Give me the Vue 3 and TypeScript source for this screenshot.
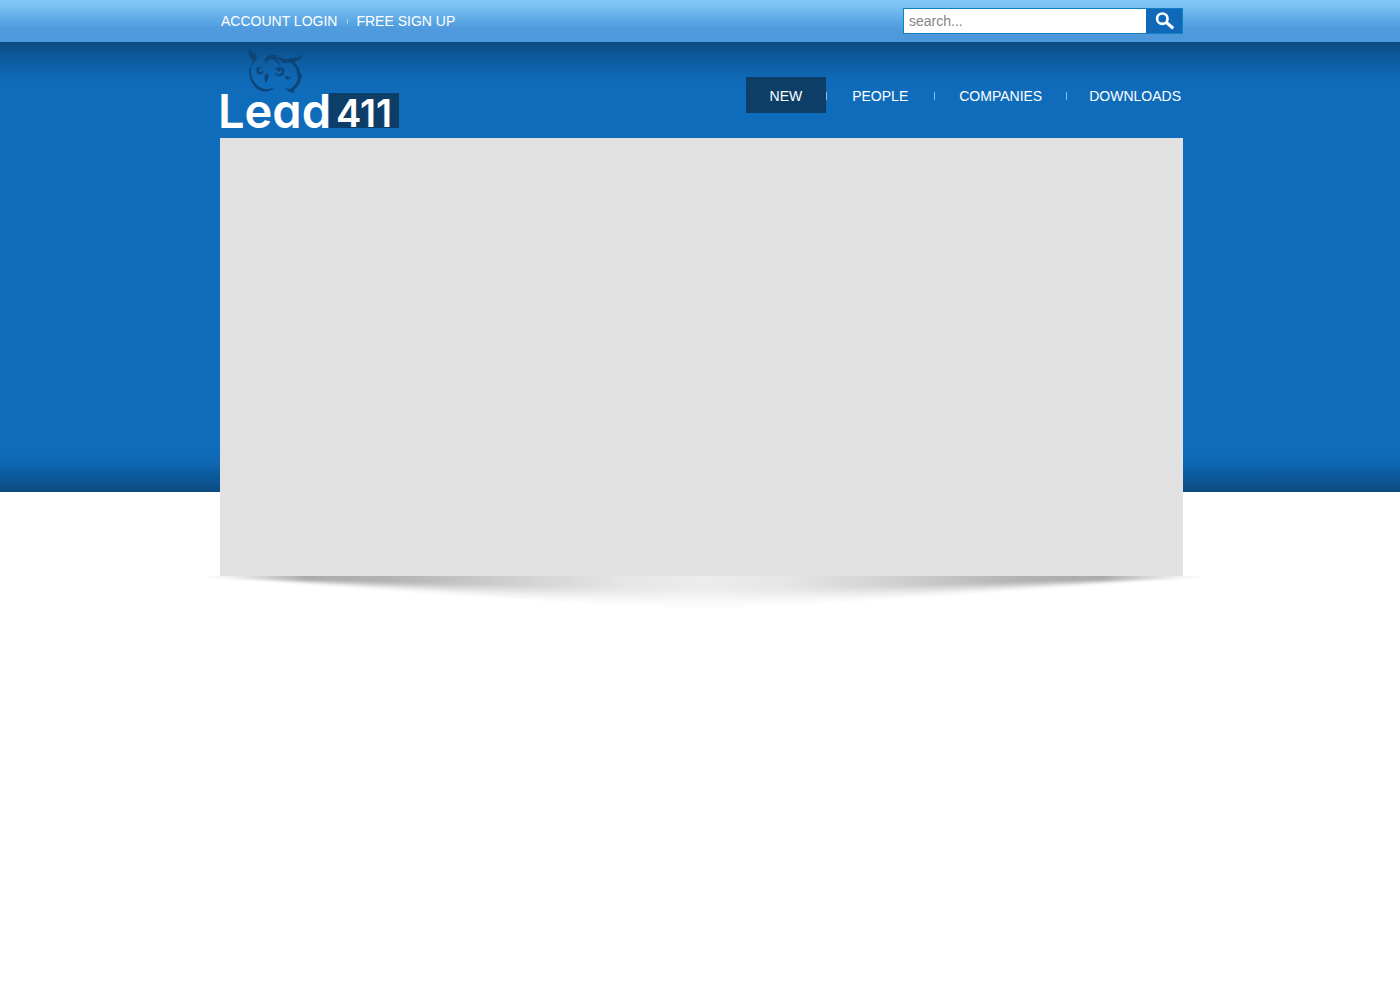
<script setup lang="ts">
import { ref } from 'vue'

interface NavItem {
  label: string
  href: string
}

const accountLinks: NavItem[] = [
  { label: 'ACCOUNT LOGIN', href: '#login' },
  { label: 'FREE SIGN UP', href: '#signup' },
]

const navItems: NavItem[] = [
  { label: 'NEW', href: '#new' },
  { label: 'PEOPLE', href: '#people' },
  { label: 'COMPANIES', href: '#companies' },
  { label: 'DOWNLOADS', href: '#downloads' },
]

const active = ref('NEW')
const query = ref('')

// Each layer of the drop shadow reaches further down and is fainter than the last.
const shadowDepths: number[] = [16, 18, 20, 22, 24, 26, 29, 32]
const shadowPath = (depth: number): string =>
  `M0 -12H996V2C900 ${depth * 0.2} 600 ${depth} 498 ${depth}S96 ${depth * 0.2} 0 2Z`
</script>

<template>
  <div class="page">
    <div class="topbar">
      <div class="wrap topbar-row">
        <nav class="account" aria-label="Account">
          <a v-for="link in accountLinks" :key="link.label" :href="link.href">{{ link.label }}</a>
        </nav>
        <form class="search" role="search" @submit.prevent>
          <input v-model="query" type="text" placeholder="search..." aria-label="Search" />
          <button type="submit" aria-label="Submit search">
            <svg width="20" height="18" viewBox="0 0 20 18" aria-hidden="true">
              <circle cx="7.3" cy="6.7" r="5.2" fill="none" stroke="#fff" stroke-width="2.7" />
              <path d="M11.2 10.2L18.2 16.4" stroke="#fff" stroke-width="3.2" />
            </svg>
          </button>
        </form>
      </div>
    </div>

    <div class="hero">
      <div class="wrap">
        <header class="header">
          <a class="logo" href="#home" aria-label="Lead 411">
            <svg class="owl" width="56" height="44" viewBox="24 15 168 132" aria-hidden="true">
              <path d="M26 15C34 24 46 28 49 37C52 43 49 47 45 51C34 60 31 74 33 88C36 111 51 128 70 134C83 138 94 134 104 129C93 142 77 146 63 140C43 133 31 113 28 91L26 76L32 70C33 62 35 57 39 51C29 44 25 30 26 15Z" />
              <path d="M76 43C86 31 101 29 118 36C111 36 109 37 107 39C121 40 130 46 134 54C123 48 114 45 108 45C116 50 121 57 120 66C113 53 101 46 94 45C85 46 82 50 78 58C73 52 73 46 76 43Z" />
              <path d="M189 33C183 45 174 51 163 54C174 65 181 79 183 93L187 92L183 104C180 119 172 129 163 137L161 147C151 147 143 141 136 133L151 135C165 126 173 113 175 97L171 100C174 84 168 70 157 59C150 54 142 55 130 58C137 48 146 43 158 42C171 42 179 39 189 33Z" />
              <path d="M118 37L134 46L158 42L150 54L130 58L122 49Z" />
              <path d="M49 77C50 68 58 66 65 71C58 71 56 75 57 80C58 84 62 87 66 84C68 81 67 78 65 76C74 79 70 91 62 91C54 92 48 86 49 77Z" />
              <path d="M104 77C110 68 124 66 131 75C138 86 130 98 118 97C108 96 103 90 105 84C109 92 116 93 121 90C127 86 127 78 120 73C125 84 111 87 112 77C110 75 107 75 104 77Z" />
              <path d="M77 88C82 87 87 91 86 97C85 105 82 111 79 117C74 110 72 104 74 97Z" />
              <path d="M132 101C138 94 150 94 154 108C150 104 148 103 145 103C146 107 145 110 142 111C143 105 139 101 132 101Z" />
            </svg>
            <span class="wordmark">
              <span class="word">Lead</span>
              <span class="digits">411</span>
            </span>
          </a>
          <nav class="menu" aria-label="Main">
            <ul>
              <li v-for="item in navItems" :key="item.label">
                <a
                  :href="item.href"
                  :class="{ active: active === item.label }"
                  @click.prevent="active = item.label"
                >{{ item.label }}</a>
              </li>
            </ul>
          </nav>
        </header>

        <main class="banner"></main>
        <svg class="shadow" viewBox="0 0 996 48" preserveAspectRatio="none" aria-hidden="true">
          <defs>
            <linearGradient id="shade" gradientUnits="userSpaceOnUse" x1="0" y1="0" x2="996" y2="0">
              <stop offset="0" stop-color="#fcfcfc" />
              <stop offset="0.03" stop-color="#ececec" />
              <stop offset="0.1" stop-color="#ababab" />
              <stop offset="0.18" stop-color="#b2b2b2" />
              <stop offset="0.32" stop-color="#d2d2d2" />
              <stop offset="0.42" stop-color="#e6e6e6" />
              <stop offset="0.5" stop-color="#ececec" />
              <stop offset="0.58" stop-color="#e6e6e6" />
              <stop offset="0.68" stop-color="#d2d2d2" />
              <stop offset="0.82" stop-color="#b2b2b2" />
              <stop offset="0.9" stop-color="#ababab" />
              <stop offset="0.97" stop-color="#ececec" />
              <stop offset="1" stop-color="#fcfcfc" />
            </linearGradient>
            <filter id="soften" filterUnits="userSpaceOnUse" x="-10" y="-20" width="1016" height="80">
              <feGaussianBlur stdDeviation="2 1" />
            </filter>
            <mask id="falloff" class="falloff" maskUnits="userSpaceOnUse" x="0" y="0" width="996" height="48">
              <g filter="url(#soften)">
                <path
                  v-for="(depth, i) in shadowDepths"
                  :key="depth"
                  :d="shadowPath(depth)"
                  fill="#fff"
                  :fill-opacity="1 / (i + 2)"
                />
                <path :d="shadowPath(13)" fill="#fff" />
              </g>
            </mask>
          </defs>
          <rect width="996" height="48" fill="url(#shade)" mask="url(#falloff)" />
        </svg>
      </div>
    </div>
  </div>
</template>

<style>
body {
  margin: 0;
  background: #fff;
}
</style>

<style scoped>
.page {
  min-height: 100vh;
  overflow-x: hidden;
  font-family: "Liberation Sans", Arial, sans-serif;
  font-size: 14px;
  line-height: 16px;
  color: #fff;
}

a {
  color: inherit;
  text-decoration: none;
}

.wrap {
  box-sizing: border-box;
  max-width: 966px;
  margin: 0 auto;
  padding-left: 3px;
}

.topbar {
  background: linear-gradient(#80c9f5 0, #7cc5f3 4px, #4f9bde 28px, #4c97da 100%);
}

.topbar-row {
  display: flex;
  justify-content: space-between;
  align-items: center;
  height: 42px;
}

.account {
  display: flex;
  align-items: center;
  padding-left: 1px;
}

.account a + a {
  display: flex;
  align-items: center;
}

.account a + a::before {
  content: "";
  width: 1px;
  height: 5px;
  margin: 0 8px 0 10px;
  background: #a9d0f1;
}

.search {
  display: flex;
  box-sizing: border-box;
  width: 280px;
  height: 26px;
  border: 1px solid #1480c4;
  background: #fff;
}

.search input {
  flex: 1;
  min-width: 0;
  padding: 0 5px;
  border: 0;
  outline: 0;
  background: none;
  font: inherit;
  color: #444;
}

.search input::placeholder {
  color: #858585;
  opacity: 1;
}

.search button {
  display: flex;
  align-items: flex-start;
  justify-content: center;
  width: 36px;
  padding: 3px 0 0 2px;
  border: 0;
  background: #0f69b8;
  cursor: pointer;
}

.hero {
  background:
    linear-gradient(#0b4a80 0, #0d5a9c 16px, #0f69b6 36px, #0f6cbb 50px, #0f6cbb 408px, #0e66b1 422px, #0b4a80 450px)
    0 0 / 100% 450px no-repeat;
}

.header {
  display: flex;
  justify-content: space-between;
  height: 96px;
}

.logo {
  display: flex;
  flex-direction: column;
  padding-top: 7px;
}

.owl {
  display: block;
  margin-left: 28px;
  fill: #0e4577;
}

.wordmark {
  display: flex;
  height: 35px;
  font-family: Inter, Lato, sans-serif;
  font-weight: 600;
  white-space: nowrap;
}

.word {
  display: flex;
  justify-content: center;
  width: 109px;
  font-size: 47px;
  font-feature-settings: "cv11";
  line-height: 36px;
}

.digits {
  width: 70px;
  background: #0d3e68;
  font-size: 38px;
  line-height: 40px;
  text-align: center;
}

.menu ul {
  display: flex;
  margin: 35px 2px 0 0;
  padding: 0;
  list-style: none;
}

.menu li {
  display: flex;
  align-items: center;
}

.menu li + li::before {
  content: "";
  width: 1px;
  height: 8px;
  margin-top: 2px;
  background: #8fbce2;
}

.menu a {
  padding: 11px 24px 9px;
}

.menu li:nth-child(2) a {
  padding: 11px 26px 9px 25px;
}

.menu li:last-child a {
  padding-left: 22px;
  padding-right: 0;
}

.menu a.active {
  background: #0d3e68;
}

.banner {
  min-height: 438px;
  background: #e1e1e1;
}

.falloff {
  mask-type: alpha;
}

.shadow {
  display: block;
  width: calc(100% + 33px);
  height: 48px;
  margin-left: -14px;
}
</style>
